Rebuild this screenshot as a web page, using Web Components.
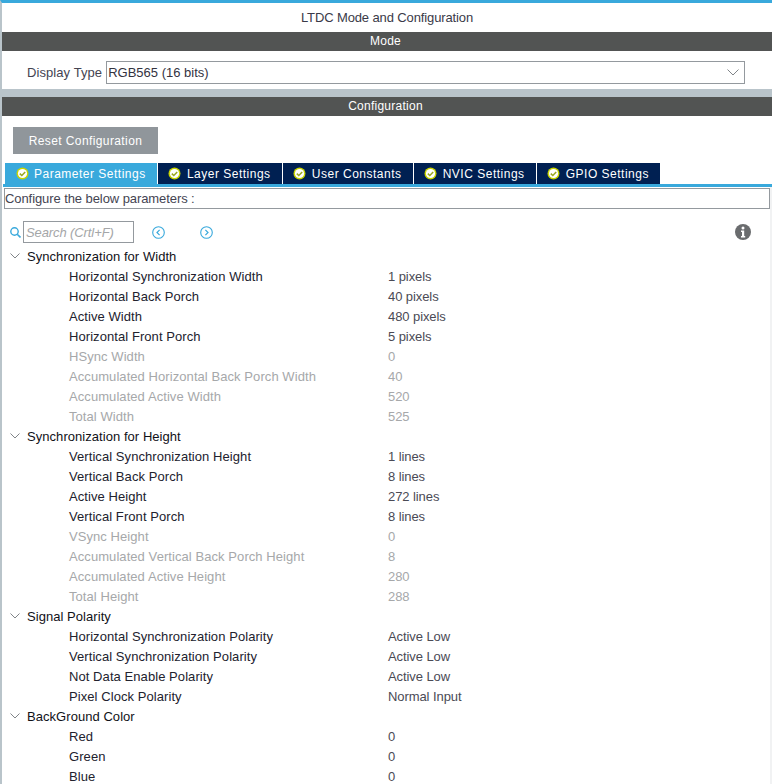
<!DOCTYPE html>
<html>
<head>
<meta charset="utf-8">
<title>LTDC Mode and Configuration</title>
<style>
	html, body { margin: 0; padding: 0; background: #ffffff; overflow: hidden; }
	body { font-family: "Liberation Sans", Arial, sans-serif; font-size: 13px; }
</style>
</head>
<body>
<ltdc-panel></ltdc-panel>

<template id="bar-template">
	<style>
		:host {
			display: block;
			height: 19px;
			padding-right: 3px;
			background: #525453;
			color: #ffffff;
			font-size: 12px;
			letter-spacing: 0.25px;
			line-height: 19px;
			text-align: center;
		}
	</style>
	<slot></slot>
</template>

<template id="tab-template">
	<style>
		:host {
			display: flex;
			align-items: center;
			gap: 5.5px;
			box-sizing: border-box;
			height: 21px;
			padding: 0 11.2px 0 10.5px;
			background: #002052;
			color: #ffffff;
			font-size: 12px;
			letter-spacing: 0.5px;
			border-right: 1px solid #ffffff;
		}
		:host([active]) { background: #39a9dc; }
		:host(:last-child) { border-right: none; }
		svg { flex: none; }
	</style>
	<svg width="13" height="13" viewBox="0 0 13 13" aria-hidden="true">
		<circle cx="6.5" cy="6.5" r="6" fill="#c8d400"/>
		<circle cx="6.5" cy="6.5" r="4.6" fill="#ffffff"/>
		<polyline points="3.8,6.6 5.8,8.5 9.2,4.9" fill="none" stroke="#9aa820" stroke-width="1.5"/>
	</svg>
	<slot></slot>
</template>

<template id="group-template">
	<style>
		:host { display: block; }
		.head {
			display: flex;
			align-items: flex-start;
			height: 20px;
			line-height: 21px;
			letter-spacing: 0.05px;
			color: #111118;
		}
		svg { flex: none; margin: 7px 7px 0 8px; }
	</style>
	<div class="head">
		<svg width="10" height="6" viewBox="0 0 10 6" aria-hidden="true">
			<polyline points="0.5,0.5 5,5 9.5,0.5" fill="none" stroke="#808488" stroke-width="1"/>
		</svg>
		<span id="title"></span>
	</div>
	<slot></slot>
</template>

<template id="row-template">
	<style>
		:host {
			display: grid;
			grid-template-columns: 319px 1fr;
			height: 20px;
			line-height: 21px;
			padding-left: 67px;
			color: #22222e;
			letter-spacing: 0.07px;
			white-space: nowrap;
		}
		:host([disabled]) { color: #a6a8aa; }
		.value { color: #4a4a55; letter-spacing: -0.08px; }
		:host([disabled]) .value { color: #a6a8aa; }
	</style>
	<span id="label"></span>
	<span class="value" id="value"></span>
</template>

<template id="panel-template">
	<style>
		:host {
			display: block;
			width: 772px;
			height: 784px;
			overflow: hidden;
			box-sizing: border-box;
			border-top: 3px solid #39a9dc;
			border-left: 2px solid #b9c4ca;
			color: #333340;
			font-size: 13px;
			position: relative;
		}
		.title {
			height: 29px;
			line-height: 29px;
			text-align: center;
			letter-spacing: -0.12px;
			color: #3a3a48;
		}
		.mode-row {
			display: flex;
			align-items: center;
			box-sizing: border-box;
			height: 38px;
			padding: 5px 0 0 25px;
			gap: 4px;
			color: #444452;
			letter-spacing: 0.08px;
		}
		.select {
			display: flex;
			align-items: center;
			justify-content: space-between;
			box-sizing: border-box;
			width: 639px;
			height: 23px;
			border: 1px solid #94999e;
			padding: 0 5px 0 1px;
			color: #33333f;
			letter-spacing: 0;
		}
		.gap { height: 8px; background: #b9c4ca; }
		.reset-row { padding: 11px 0 0 11px; height: 36px; }
		.reset {
			width: 145px;
			height: 27px;
			background: #90969b;
			color: #ffffff;
			font-size: 12px;
			text-align: center;
			line-height: 28px;
			letter-spacing: 0.4px;
		}
		.tabs {
			display: flex;
			margin-left: 1px;
			padding-left: 2px;
			border-bottom: 3px solid #39a9dc;
		}
		.describe {
			box-sizing: border-box;
			height: 21px;
			margin: 1px 0 0 2px;
			width: 766px;
			border: 1px solid #94999e;
			line-height: 19px;
			letter-spacing: -0.08px;
			color: #444452;
		}
		.search-row {
			display: flex;
			align-items: center;
			height: 22px;
			margin-top: 12px;
			padding-left: 8px;
		}
		.search {
			box-sizing: border-box;
			width: 111px;
			height: 22px;
			margin-left: 2px;
			border: 1px solid #94999e;
			line-height: 21px;
			padding-left: 2px;
			font-style: italic;
			letter-spacing: -0.1px;
			color: #a4a6a8;
		}
		.nav-1 { margin-left: 18px; }
		.nav-2 { margin-left: 35px; }
		.info { margin-left: auto; margin-right: 21px; }
		.tree { margin-top: 3px; }
		.edge {
			position: absolute;
			top: 184px;
			bottom: 0;
			right: 0;
			width: 2px;
			background: #f1f2f3;
		}
	</style>
	<div class="title">LTDC Mode and Configuration</div>
	<ltdc-bar>Mode</ltdc-bar>
	<div class="mode-row">
		<span>Display Type</span>
		<div class="select">
			<span>RGB565 (16 bits)</span>
			<svg width="12" height="7" viewBox="0 0 12 7" aria-hidden="true">
				<polyline points="0.5,0.5 6,6 11.5,0.5" fill="none" stroke="#808488" stroke-width="1"/>
			</svg>
		</div>
	</div>
	<div class="gap"></div>
	<ltdc-bar>Configuration</ltdc-bar>
	<div class="reset-row"><div class="reset">Reset Configuration</div></div>
	<div class="tabs">
		<ltdc-tab active>Parameter Settings</ltdc-tab>
		<ltdc-tab>Layer Settings</ltdc-tab>
		<ltdc-tab>User Constants</ltdc-tab>
		<ltdc-tab>NVIC Settings</ltdc-tab>
		<ltdc-tab>GPIO Settings</ltdc-tab>
	</div>
	<div class="describe">Configure the below parameters :</div>
	<div class="search-row">
		<svg width="11" height="11" viewBox="0 0 11 11" aria-hidden="true">
			<circle cx="4.5" cy="4.5" r="3.7" fill="none" stroke="#39a9dc" stroke-width="1.4"/>
			<line x1="7.2" y1="7.2" x2="10.5" y2="10.5" stroke="#39a9dc" stroke-width="1.6"/>
		</svg>
		<div class="search">Search (Crtl+F)</div>
		<svg class="nav-1" width="13" height="13" viewBox="0 0 13 13" aria-hidden="true">
			<circle cx="6.5" cy="6.5" r="5.8" fill="none" stroke="#39a9dc" stroke-width="1.1"/>
			<polyline points="7.6,3.9 5,6.5 7.6,9.1" fill="none" stroke="#39a9dc" stroke-width="1.2"/>
		</svg>
		<svg class="nav-2" width="13" height="13" viewBox="0 0 13 13" aria-hidden="true">
			<circle cx="6.5" cy="6.5" r="5.8" fill="none" stroke="#39a9dc" stroke-width="1.1"/>
			<polyline points="5.4,3.9 8,6.5 5.4,9.1" fill="none" stroke="#39a9dc" stroke-width="1.2"/>
		</svg>
		<svg class="info" width="16" height="16" viewBox="0 0 16 16" aria-hidden="true">
			<circle cx="8" cy="8" r="8" fill="#6a6c6e"/>
			<circle cx="8" cy="4" r="1.5" fill="#ffffff"/>
			<path d="M6 6.6h3.2v5.4h1v1.4H6V12h1V8H6z" fill="#ffffff"/>
		</svg>
	</div>
	<div class="tree"><slot></slot></div>
	<div class="edge"></div>
</template>

<script>
	const groups = [
		['Synchronization for Width', [
			['Horizontal Synchronization Width', '1 pixels'],
			['Horizontal Back Porch', '40 pixels'],
			['Active Width', '480 pixels'],
			['Horizontal Front Porch', '5 pixels'],
			['HSync Width', '0', true],
			['Accumulated Horizontal Back Porch Width', '40', true],
			['Accumulated Active Width', '520', true],
			['Total Width', '525', true],
		]],
		['Synchronization for Height', [
			['Vertical Synchronization Height', '1 lines'],
			['Vertical Back Porch', '8 lines'],
			['Active Height', '272 lines'],
			['Vertical Front Porch', '8 lines'],
			['VSync Height', '0', true],
			['Accumulated Vertical Back Porch Height', '8', true],
			['Accumulated Active Height', '280', true],
			['Total Height', '288', true],
		]],
		['Signal Polarity', [
			['Horizontal Synchronization Polarity', 'Active Low'],
			['Vertical Synchronization Polarity', 'Active Low'],
			['Not Data Enable Polarity', 'Active Low'],
			['Pixel Clock Polarity', 'Normal Input'],
		]],
		['BackGround Color', [
			['Red', '0'],
			['Green', '0'],
			['Blue', '0'],
		]],
	];

	function shadow(el, id) {
		const root = el.attachShadow({ mode: 'open' });
		root.appendChild(document.getElementById(id).content.cloneNode(true));
		return root;
	}

	class LtdcBar extends HTMLElement {
		constructor() {
			super();
			shadow(this, 'bar-template');
		}
	}

	class LtdcTab extends HTMLElement {
		constructor() {
			super();
			shadow(this, 'tab-template');
		}
	}

	class LtdcGroup extends HTMLElement {
		constructor() {
			super();
			this.root = shadow(this, 'group-template');
		}

		connectedCallback() {
			this.root.getElementById('title').textContent = this.getAttribute('title');
		}
	}

	class LtdcRow extends HTMLElement {
		constructor() {
			super();
			this.root = shadow(this, 'row-template');
		}

		connectedCallback() {
			this.root.getElementById('label').textContent = this.getAttribute('label');
			this.root.getElementById('value').textContent = this.getAttribute('value');
		}
	}

	class LtdcPanel extends HTMLElement {
		constructor() {
			super();
			shadow(this, 'panel-template');
		}

		connectedCallback() {
			for (const [title, rows] of groups) {
				const group = document.createElement('ltdc-group');
				group.setAttribute('title', title);
				for (const [label, value, disabled] of rows) {
					const row = document.createElement('ltdc-row');
					row.setAttribute('label', label);
					row.setAttribute('value', value);
					if (disabled) row.setAttribute('disabled', '');
					group.appendChild(row);
				}
				this.appendChild(group);
			}
		}
	}

	customElements.define('ltdc-bar', LtdcBar);
	customElements.define('ltdc-tab', LtdcTab);
	customElements.define('ltdc-group', LtdcGroup);
	customElements.define('ltdc-row', LtdcRow);
	customElements.define('ltdc-panel', LtdcPanel);
</script>
</body>
</html>
